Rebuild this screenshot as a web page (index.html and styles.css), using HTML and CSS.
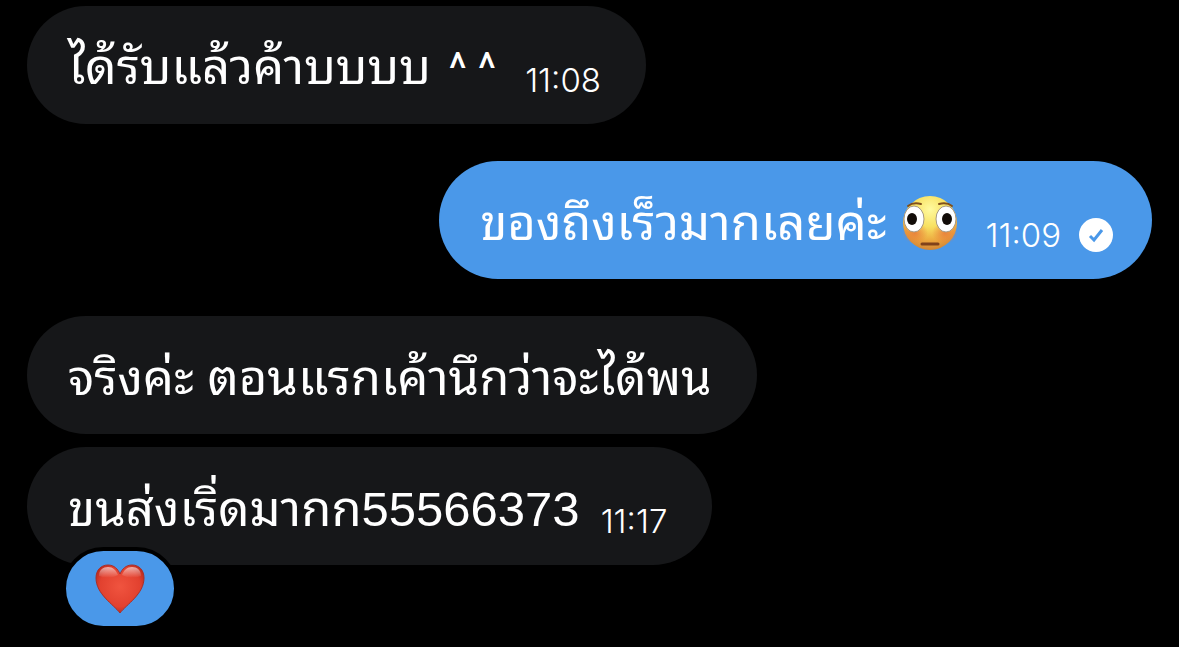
FILE: index.html
```html
<!DOCTYPE html>
<html lang="th">
<head>
    <meta charset="UTF-8">
    <meta name="viewport" content="width=device-width, initial-scale=1.0">
    <title>Messages</title>
    <link rel="stylesheet" href="styles.css">
</head>
<body>

<main class="chat">
    <!-- Received -->
    <div class="message received">
        <p class="text">ได้รับแล้วค้าบบบบ <span class="carets">^ ^</span></p>
        <time class="time" datetime="11:08">11:08</time>
    </div>

    <!-- Sent -->
    <div class="message sent">
        <p class="text">ของถึงเร็วมากเลยค่ะ</p>
        <svg class="emoji" viewBox="0 0 56 56" role="img" aria-label="Flushed face">
            <defs>
                <radialGradient id="face" cx="50%" cy="25%" r="80%">
                    <stop offset="0" stop-color="#fffaa0"/>
                    <stop offset="0.4" stop-color="#f8e060"/>
                    <stop offset="0.75" stop-color="#eba33c"/>
                    <stop offset="1" stop-color="#c87c34"/>
                </radialGradient>
                <radialGradient id="blush">
                    <stop offset="0" stop-color="#e8783a" stop-opacity="0.8"/>
                    <stop offset="1" stop-color="#e8783a" stop-opacity="0"/>
                </radialGradient>
            </defs>
            <circle cx="28" cy="28" r="27" fill="url(#face)"/>
            <ellipse cx="13" cy="38" rx="13" ry="11" fill="url(#blush)"/>
            <ellipse cx="43" cy="38" rx="13" ry="11" fill="url(#blush)"/>
            <ellipse cx="12" cy="24" rx="10" ry="13" fill="#fff" stroke="#a79a84" stroke-width="1"/>
            <ellipse cx="44" cy="24" rx="10" ry="13" fill="#fff" stroke="#a79a84" stroke-width="1"/>
            <ellipse cx="10" cy="24" rx="5" ry="6" fill="#120c08"/>
            <ellipse cx="45" cy="24" rx="5" ry="6" fill="#120c08"/>
            <path d="M6 11q5-4 13-2M37 9q8-2 13 2" fill="none" stroke="#80501c" stroke-width="2" stroke-linecap="round"/>
            <path d="M20 49h16" stroke="#80421a" stroke-width="3" stroke-linecap="round"/>
        </svg>
        <time class="time" datetime="11:09">11:09</time>
        <svg class="status" viewBox="0 0 34 34" role="img" aria-label="Sent">
            <circle cx="17" cy="17" r="17" fill="#fff"/>
            <path d="M11 18l4 4L23 12" fill="none" stroke="#4a98e9" stroke-width="3"/>
        </svg>
    </div>

    <!-- Received -->
    <div class="message received">
        <p class="text">จริงค่ะ ตอนแรกเค้านึกว่าจะได้พน</p>
    </div>

    <div class="message received grouped">
        <p class="text">ขนส่งเริ่ดมากก55566373</p>
        <time class="time" datetime="11:17">11:17</time>
        <button class="reaction" type="button" aria-label="Heart reaction">
            <svg class="heart" viewBox="0 0 50 50" aria-hidden="true">
                <defs>
                    <radialGradient id="red" cx="50%" cy="45%" r="60%">
                        <stop offset="0" stop-color="#f0543f"/>
                        <stop offset="0.7" stop-color="#e2412f"/>
                        <stop offset="1" stop-color="#b3271c"/>
                    </radialGradient>
                    <linearGradient id="shine" x2="0" y2="1">
                        <stop offset="0" stop-color="#fff" stop-opacity="0.6"/>
                        <stop offset="1" stop-color="#fff" stop-opacity="0"/>
                    </linearGradient>
                </defs>
                <path d="M25 49C18 40 1 30 1 14 1 6 6 1 13 1c6 0 10 4 12 9 2-5 6-9 12-9 7 0 12 5 12 13 0 16-17 26-24 35z" fill="url(#red)" stroke="#a8302a" stroke-width="1"/>
                <path d="M4 12C4 6 8 3 13 3s8 3 10 8q-9 5-19 1zM46 12c0-6-4-9-9-9s-8 3-10 8q9 5 19 1z" fill="url(#shine)"/>
            </svg>
        </button>
    </div>
</main>

</body>
</html>
```
FILE: styles.css
```css
* {
    margin: 0;
    padding: 0;
    box-sizing: border-box;
}

body {
    font-family: "Liberation Sans", "Noto Sans Thai Looped", Loma, Garuda, Waree, "Noto Sans", sans-serif;
    background-color: #000;
    color: #fff;
}

.chat {
    display: flex;
    flex-direction: column;
    align-items: flex-start;
    gap: 37px;
    padding: 6px 27px 81px;
}

.message {
    position: relative;
    display: flex;
    align-items: center;
    min-height: 118px;
    padding: 0 45px 0 41px;
    border-radius: 59px;
    white-space: nowrap;
}

.received {
    background-color: #161719;
}

.sent {
    align-self: flex-end;
    padding-right: 39px;
    background-color: #4a98e9;
}

.grouped {
    margin-top: -24px;
}

.text {
    padding-top: 6px;
    font-size: 49px;
    line-height: 60px;
}

.carets {
    margin: 0 8px 0 4px;
    font-family: Roboto, sans-serif;
    font-size: 44px;
}

.time {
    margin: 29px 0 0 21px;
    font-family: Inter, sans-serif;
    font-size: 33px;
    font-weight: 300;
    line-height: 40px;
}

.emoji {
    width: 56px;
    height: 56px;
    margin: 6px 6px 0 16px;
}

.status {
    width: 34px;
    height: 34px;
    margin: 29px 0 0 18px;
}

/* Reaction overlaps the bottom edge of the bubble */
.reaction {
    position: absolute;
    top: 100px;
    left: 35px;
    display: flex;
    justify-content: center;
    width: 116px;
    height: 83px;
    padding: 13px 0;
    border: 4px solid #000;
    border-radius: 42px;
    background-color: #4a98e9;
    cursor: pointer;
}

.heart {
    width: 50px;
    height: 50px;
}
```
